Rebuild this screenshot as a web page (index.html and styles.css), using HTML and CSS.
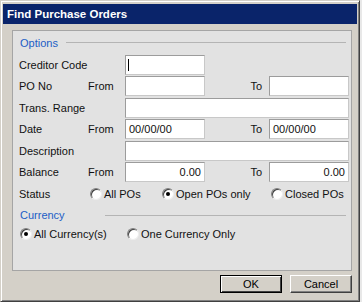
FILE: index.html
```html
<!DOCTYPE html>
<html lang="en">
<head>
<meta charset="UTF-8">
<title>Find Purchase Orders</title>
<link rel="stylesheet" href="styles.css">
</head>
<body>

<div class="window">
  <div class="titlebar">Find Purchase Orders</div>

  <div class="panel">
    <div class="legend"><span>Options</span><span class="rule"></span></div>

    <div class="form">
      <span class="lbl">Creditor Code</span>
      <span></span>
      <div class="field"><span class="caret"></span></div>
      <span></span>
      <span></span>

      <span class="lbl">PO No</span>
      <span class="lbl">From</span>
      <div class="field"></div>
      <span class="lbl to">To</span>
      <div class="field"></div>

      <span class="lbl">Trans. Range</span>
      <span></span>
      <div class="field wide"></div>

      <span class="lbl">Date</span>
      <span class="lbl">From</span>
      <div class="field">00/00/00</div>
      <span class="lbl to">To</span>
      <div class="field">00/00/00</div>

      <span class="lbl">Description</span>
      <span></span>
      <div class="field wide"></div>

      <span class="lbl">Balance</span>
      <span class="lbl">From</span>
      <div class="field num">0.00</div>
      <span class="lbl to">To</span>
      <div class="field num">0.00</div>
    </div>

    <div class="status">
      <span class="status-lbl">Status</span>
      <label class="opt opt-all"><span class="radio"></span>All POs</label>
      <label class="opt opt-open"><span class="radio checked"></span>Open POs only</label>
      <label class="opt"><span class="radio"></span>Closed POs</label>
    </div>

    <div class="legend currency"><span>Currency</span><span class="rule"></span></div>

    <div class="currency-row">
      <label class="opt opt-cur"><span class="radio checked"></span>All Currency(s)</label>
      <label class="opt"><span class="radio"></span>One Currency Only</label>
    </div>
  </div>

  <div class="buttons">
    <button class="btn default">OK</button>
    <button class="btn">Cancel</button>
  </div>
</div>

</body>
</html>
```

FILE: styles.css
```css
body {
  margin: 0;
  background-color: #e8e8e8;
  font-family: "Liberation Sans", Arial, sans-serif;
  font-size: 11px;
  color: #111;
}
.window {
  width: 360px;
  height: 302px;
  box-sizing: border-box;
  padding: 3px 2px 2px 2px;
  background-color: #d4d0c8;
  border: 1px solid;
  border-color: #d4d0c8 #404040 #404040 #d4d0c8;
  box-shadow: inset 1px 1px #fff, inset -1px -1px #808080;
}
.titlebar {
  height: 20px;
  line-height: 20px;
  padding-left: 4px;
  background-color: #0a246a;
  color: #fff;
  font-weight: bold;
  font-size: 11.5px;
}
.panel {
  margin: 6px 5px 0 9px;
  height: 241px;
  box-sizing: border-box;
  padding: 5px 2px 0 6px;
  background-color: #e2e2e2;
  border: 1px solid #a5a5a5;
}
.legend {
  display: flex;
  align-items: center;
  height: 13px;
  padding-left: 1px;
  color: #215dc6;
}
.legend .rule {
  flex: 1;
  height: 1px;
  margin: 0 3px 0 8px;
  background-color: #b4b4b4;
}
.legend.currency {
  margin-top: 7px;
}
.legend.currency .rule {
  margin-left: 40px;
}
.form {
  display: grid;
  grid-template-columns: 69px 37px 80px 64px 80px;
  grid-auto-rows: 20px;
  row-gap: 1.4px;
  margin-top: 6px;
}
.lbl {
  line-height: 20px;
  white-space: nowrap;
}
.lbl.to {
  text-align: right;
  padding-right: 7px;
}
.field {
  position: relative;
  box-sizing: border-box;
  height: 20px;
  line-height: 18px;
  padding: 0 3px;
  background-color: #fff;
  border: 1px solid;
  border-color: #9c9c9c #c8c8c8 #c8c8c8 #9c9c9c;
}
.field.wide {
  grid-column: 3 / 6;
}
.field.num {
  text-align: right;
}
.caret {
  position: absolute;
  left: 2px;
  top: 3px;
  width: 1px;
  height: 12px;
  background-color: #000;
}
.status {
  display: flex;
  align-items: center;
  height: 16px;
  margin-top: 4px;
}
.status-lbl {
  width: 71px;
}
.opt {
  display: flex;
  align-items: center;
  gap: 2px;
  white-space: nowrap;
}
.opt-all {
  width: 72px;
}
.opt-open {
  width: 109px;
}
.currency-row {
  display: flex;
  align-items: center;
  height: 16px;
  margin-top: 4px;
  padding-left: 1px;
}
.opt-cur {
  width: 107px;
}
.radio {
  position: relative;
  width: 12px;
  height: 12px;
  box-sizing: border-box;
  border-radius: 50%;
  background-color: #fff;
  border: 1px solid;
  border-color: #808080 #eeeeee #eeeeee #808080;
  box-shadow: inset 1px 1px #404040;
}
.radio.checked::after {
  content: "";
  position: absolute;
  left: 3px;
  top: 3px;
  width: 4px;
  height: 4px;
  border-radius: 50%;
  background-color: #000;
}
.buttons {
  display: flex;
  justify-content: flex-end;
  gap: 8px;
  margin: 4px 5px 0 0;
}
.btn {
  width: 62px;
  height: 18px;
  padding: 0;
  font-family: "Liberation Sans", Arial, sans-serif;
  font-size: 11px;
  color: #000;
  background-color: #d4d0c8;
  border: 1px solid;
  border-color: #fff #404040 #404040 #fff;
  box-shadow: inset -1px -1px #808080;
}
.btn.default {
  border-color: #000;
  box-shadow: inset 1px 1px #fff, inset -1px -1px #404040;
}
```
